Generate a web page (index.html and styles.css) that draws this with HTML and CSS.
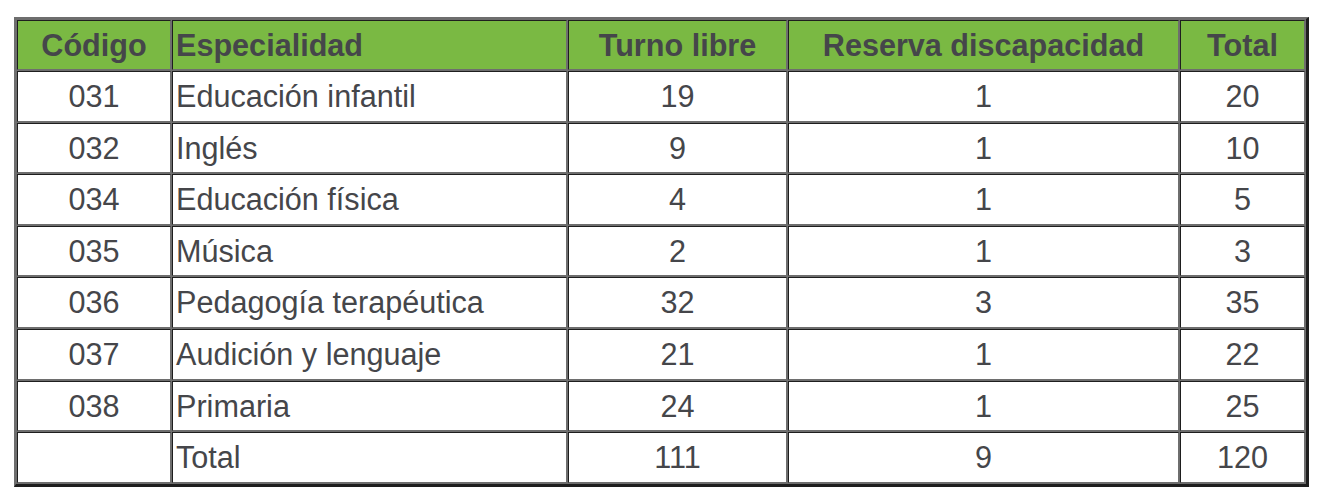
FILE: index.html
```html
<!DOCTYPE html>
<html lang="es">
<head>
<meta charset="utf-8">
<title>Plazas</title>
<link rel="stylesheet" href="styles.css">
</head>
<body>
<table class="plazas">
  <colgroup>
    <col class="c1"><col class="c2"><col class="c3"><col class="c4"><col class="c5">
  </colgroup>
  <thead>
    <tr>
      <th>Código</th>
      <th class="left">Especialidad</th>
      <th>Turno libre</th>
      <th>Reserva discapacidad</th>
      <th>Total</th>
    </tr>
  </thead>
  <tbody>
    <tr><td>031</td><td class="left">Educación infantil</td><td>19</td><td>1</td><td>20</td></tr>
    <tr><td>032</td><td class="left">Inglés</td><td>9</td><td>1</td><td>10</td></tr>
    <tr><td>034</td><td class="left">Educación física</td><td>4</td><td>1</td><td>5</td></tr>
    <tr><td>035</td><td class="left">Música</td><td>2</td><td>1</td><td>3</td></tr>
    <tr><td>036</td><td class="left">Pedagogía terapéutica</td><td>32</td><td>3</td><td>35</td></tr>
    <tr><td>037</td><td class="left">Audición y lenguaje</td><td>21</td><td>1</td><td>22</td></tr>
    <tr><td>038</td><td class="left">Primaria</td><td>24</td><td>1</td><td>25</td></tr>
    <tr><td></td><td class="left">Total</td><td>111</td><td>9</td><td>120</td></tr>
  </tbody>
</table>
</body>
</html>
```
FILE: styles.css
```css
html, body {
  margin: 0;
  padding: 0;
  background: #ffffff;
}

.plazas {
  margin: 17px 0 0 14px;
  border-collapse: separate;
  border-spacing: 1px;
  table-layout: fixed;
  width: 1294px;
  background: #6e6e6e;
  border-style: solid;
  border-width: 2px 3px 3px 2px;
  border-color: #6e6e6e #1e1e1e #1e1e1e #6e6e6e;
  font-family: "Liberation Sans", Arial, sans-serif;
  font-size: 30.6px;
  color: #45464a;
}

.c1 { width: 154px; }
.c2 { width: 395px; }
.c3 { width: 219px; }
.c4 { width: 391px; }
.c5 { width: 125px; }

.plazas th,
.plazas td {
  box-sizing: border-box;
  border-style: solid;
  border-width: 1px;
  border-color: #1e1e1e #6e6e6e #6e6e6e #1e1e1e;
  padding: 0 3px;
  text-align: center;
  vertical-align: middle;
  white-space: nowrap;
  line-height: 1;
}

.plazas th {
  background: #7ab943;
  font-weight: bold;
  height: 50px;
}

.plazas td {
  background: #ffffff;
  height: 50.6px;
}

.plazas .left {
  text-align: left;
}
```
